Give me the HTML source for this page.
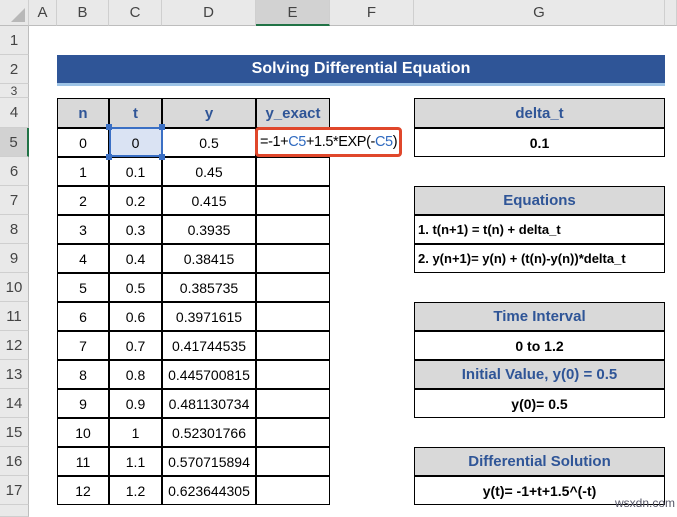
<!DOCTYPE html><html><head><style>
*{margin:0;padding:0;box-sizing:border-box}
body{width:677px;height:515px;background:#fff;position:relative;overflow:hidden;font-family:"Liberation Sans",sans-serif;font-size:14px;color:#000}
.a{position:absolute;display:flex;align-items:center;justify-content:center;white-space:nowrap}
.ch{top:0;height:26px;background:#e9e9e9;border-right:1px solid #cfcfcf;border-bottom:1px solid #bdbdbd;color:#444;font-size:15px}
.rh{left:0;width:29px;background:#e9e9e9;border-bottom:1px solid #cfcfcf;border-right:1px solid #bdbdbd;color:#444;font-size:15px}
.c{border:1px solid #000;margin:-1px 0 0 -1px}
.hd{background:#d9d9d9;color:#2f5597;font-weight:bold;font-size:15px}
.b{font-weight:bold}
</style></head><body>
<div class="a ch" style="left:0;width:29px"><svg width="14" height="14" style="position:absolute;right:3px;bottom:3px"><path d="M14 0V14H0Z" fill="#b8b8b8"/></svg></div>
<div class="a ch" style="left:29px;width:28px">A</div>
<div class="a ch" style="left:57px;width:52px">B</div>
<div class="a ch" style="left:109px;width:53px">C</div>
<div class="a ch" style="left:162px;width:94px">D</div>
<div class="a ch" style="left:256px;width:74px;background:#d2d2d2;border-bottom:2px solid #217346">E</div>
<div class="a ch" style="left:330px;width:84px">F</div>
<div class="a ch" style="left:414px;width:251px">G</div>
<div class="a ch" style="left:665px;width:12px"></div>
<div class="a rh" style="top:26px;height:29px">1</div>
<div class="a rh" style="top:55px;height:29px">2</div>
<div class="a rh" style="top:84px;height:14px;font-size:12px">3</div>
<div class="a rh" style="top:98px;height:30px">4</div>
<div class="a rh" style="top:128px;height:29px;background:#d2d2d2;border-right:2px solid #217346">5</div>
<div class="a rh" style="top:157px;height:29px">6</div>
<div class="a rh" style="top:186px;height:29px">7</div>
<div class="a rh" style="top:215px;height:29px">8</div>
<div class="a rh" style="top:244px;height:29px">9</div>
<div class="a rh" style="top:273px;height:29px">10</div>
<div class="a rh" style="top:302px;height:29px">11</div>
<div class="a rh" style="top:331px;height:29px">12</div>
<div class="a rh" style="top:360px;height:29px">13</div>
<div class="a rh" style="top:389px;height:29px">14</div>
<div class="a rh" style="top:418px;height:29px">15</div>
<div class="a rh" style="top:447px;height:29px">16</div>
<div class="a rh" style="top:476px;height:29px">17</div>
<div class="a rh" style="top:505px;height:12px"></div>
<div class="a" style="left:57px;top:55px;width:608px;height:28px;background:#2f5597;color:#fff;font-weight:bold;font-size:16px">Solving Differential Equation</div>
<div style="position:absolute;left:57px;top:83px;width:608px;height:3px;background:#9dc3e6"></div>
<div class="a c hd" style="left:58px;top:99px;width:52px;height:30px">n</div>
<div class="a c hd" style="left:110px;top:99px;width:53px;height:30px">t</div>
<div class="a c hd" style="left:163px;top:99px;width:94px;height:30px">y</div>
<div class="a c hd" style="left:257px;top:99px;width:74px;height:30px">y_exact</div>
<div class="a c" style="left:58px;top:129px;width:52px;height:29px">0</div><div class="a c" style="left:110px;top:129px;width:53px;height:29px;background:#dae3f3">0</div><div class="a c" style="left:163px;top:129px;width:94px;height:29px">0.5</div><div class="a c" style="left:257px;top:129px;width:74px;height:29px"></div>
<div class="a c" style="left:58px;top:158px;width:52px;height:29px">1</div><div class="a c" style="left:110px;top:158px;width:53px;height:29px">0.1</div><div class="a c" style="left:163px;top:158px;width:94px;height:29px">0.45</div><div class="a c" style="left:257px;top:158px;width:74px;height:29px"></div>
<div class="a c" style="left:58px;top:187px;width:52px;height:29px">2</div><div class="a c" style="left:110px;top:187px;width:53px;height:29px">0.2</div><div class="a c" style="left:163px;top:187px;width:94px;height:29px">0.415</div><div class="a c" style="left:257px;top:187px;width:74px;height:29px"></div>
<div class="a c" style="left:58px;top:216px;width:52px;height:29px">3</div><div class="a c" style="left:110px;top:216px;width:53px;height:29px">0.3</div><div class="a c" style="left:163px;top:216px;width:94px;height:29px">0.3935</div><div class="a c" style="left:257px;top:216px;width:74px;height:29px"></div>
<div class="a c" style="left:58px;top:245px;width:52px;height:29px">4</div><div class="a c" style="left:110px;top:245px;width:53px;height:29px">0.4</div><div class="a c" style="left:163px;top:245px;width:94px;height:29px">0.38415</div><div class="a c" style="left:257px;top:245px;width:74px;height:29px"></div>
<div class="a c" style="left:58px;top:274px;width:52px;height:29px">5</div><div class="a c" style="left:110px;top:274px;width:53px;height:29px">0.5</div><div class="a c" style="left:163px;top:274px;width:94px;height:29px">0.385735</div><div class="a c" style="left:257px;top:274px;width:74px;height:29px"></div>
<div class="a c" style="left:58px;top:303px;width:52px;height:29px">6</div><div class="a c" style="left:110px;top:303px;width:53px;height:29px">0.6</div><div class="a c" style="left:163px;top:303px;width:94px;height:29px">0.3971615</div><div class="a c" style="left:257px;top:303px;width:74px;height:29px"></div>
<div class="a c" style="left:58px;top:332px;width:52px;height:29px">7</div><div class="a c" style="left:110px;top:332px;width:53px;height:29px">0.7</div><div class="a c" style="left:163px;top:332px;width:94px;height:29px">0.41744535</div><div class="a c" style="left:257px;top:332px;width:74px;height:29px"></div>
<div class="a c" style="left:58px;top:361px;width:52px;height:29px">8</div><div class="a c" style="left:110px;top:361px;width:53px;height:29px">0.8</div><div class="a c" style="left:163px;top:361px;width:94px;height:29px">0.445700815</div><div class="a c" style="left:257px;top:361px;width:74px;height:29px"></div>
<div class="a c" style="left:58px;top:390px;width:52px;height:29px">9</div><div class="a c" style="left:110px;top:390px;width:53px;height:29px">0.9</div><div class="a c" style="left:163px;top:390px;width:94px;height:29px">0.481130734</div><div class="a c" style="left:257px;top:390px;width:74px;height:29px"></div>
<div class="a c" style="left:58px;top:419px;width:52px;height:29px">10</div><div class="a c" style="left:110px;top:419px;width:53px;height:29px">1</div><div class="a c" style="left:163px;top:419px;width:94px;height:29px">0.52301766</div><div class="a c" style="left:257px;top:419px;width:74px;height:29px"></div>
<div class="a c" style="left:58px;top:448px;width:52px;height:29px">11</div><div class="a c" style="left:110px;top:448px;width:53px;height:29px">1.1</div><div class="a c" style="left:163px;top:448px;width:94px;height:29px">0.570715894</div><div class="a c" style="left:257px;top:448px;width:74px;height:29px"></div>
<div class="a c" style="left:58px;top:477px;width:52px;height:29px">12</div><div class="a c" style="left:110px;top:477px;width:53px;height:29px">1.2</div><div class="a c" style="left:163px;top:477px;width:94px;height:29px">0.623644305</div><div class="a c" style="left:257px;top:477px;width:74px;height:29px"></div>
<div style="position:absolute;left:109px;top:127px;width:54px;height:30px;border:2px solid #3a6fc4"></div>
<div style="position:absolute;left:106px;top:124px;width:6px;height:6px;background:#3a6fc4"></div>
<div style="position:absolute;left:159px;top:124px;width:6px;height:6px;background:#3a6fc4"></div>
<div style="position:absolute;left:106px;top:154px;width:6px;height:6px;background:#3a6fc4"></div>
<div style="position:absolute;left:159px;top:154px;width:6px;height:6px;background:#3a6fc4"></div>
<div class="a" style="left:255px;top:127px;width:147px;height:30px;border:3px solid #e0472b;border-radius:4px;background:#fff;justify-content:flex-start;padding-left:2px;font-size:14.5px;letter-spacing:-0.4px">=-1+<span style="color:#2f6ac0">C5</span>+1.5*EXP(-<span style="color:#2f6ac0">C5</span>)</div>
<div class="a c hd" style="left:415px;top:99px;width:251px;height:30px">delta_t</div>
<div class="a c b" style="left:415px;top:129px;width:251px;height:29px">0.1</div>
<div class="a c hd" style="left:415px;top:187px;width:251px;height:29px">Equations</div>
<div class="a c b" style="left:415px;top:216px;width:251px;height:29px;justify-content:flex-start;padding-left:3px;font-size:13px">1. t(n+1) = t(n) + delta_t</div>
<div class="a c b" style="left:415px;top:245px;width:251px;height:29px;justify-content:flex-start;padding-left:3px;font-size:13px">2. y(n+1)= y(n) + (t(n)-y(n))*delta_t</div>
<div class="a c hd" style="left:415px;top:303px;width:251px;height:29px">Time Interval</div>
<div class="a c b" style="left:415px;top:332px;width:251px;height:29px">0 to 1.2</div>
<div class="a c hd" style="left:415px;top:361px;width:251px;height:29px">Initial Value, y(0) = 0.5</div>
<div class="a c b" style="left:415px;top:390px;width:251px;height:29px">y(0)= 0.5</div>
<div class="a c hd" style="left:415px;top:448px;width:251px;height:29px">Differential Solution</div>
<div class="a c b" style="left:415px;top:477px;width:251px;height:29px">y(t)= -1+t+1.5^(-t)</div>
<div style="position:absolute;left:615px;top:496px;font-size:12px;color:#556">wsxdn.com</div>
</body></html>
